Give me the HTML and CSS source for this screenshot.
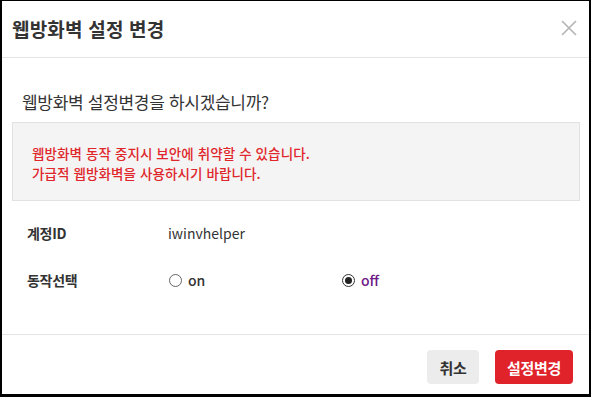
FILE: index.html
```html
<!DOCTYPE html>
<html lang="ko">
<head>
    <meta charset="UTF-8">
    <meta name="viewport" content="width=device-width, initial-scale=1.0">
    <title>웹방화벽 설정 변경</title>
    <link rel="stylesheet" href="styles.css">
</head>
<body>
    <div class="modal">
        <div class="modal-head">
            <h2 class="modal-title">웹방화벽 설정 변경</h2>
            <button class="btn-close" type="button">
                <svg width="16" height="16" viewBox="0 0 16 16"><path d="M1 1L15 15M15 1L1 15" stroke="#b4b4b4" stroke-width="1.6" fill="none"/></svg>
            </button>
        </div>
        <div class="modal-body">
            <p class="question">웹방화벽 설정변경을 하시겠습니까?</p>
            <div class="notice">
                <p>웹방화벽 동작 중지시 보안에 취약할 수 있습니다.</p>
                <p>가급적 웹방화벽을 사용하시기 바랍니다.</p>
            </div>
            <ul class="info">
                <li>
                    <span class="info-label">계정ID</span>
                    <span class="info-value">iwinvhelper</span>
                </li>
                <li>
                    <span class="info-label">동작선택</span>
                    <div class="radios">
                        <label class="radio"><i class="radio-dot"></i>on</label>
                        <label class="radio radio-checked"><i class="radio-dot"></i>off</label>
                    </div>
                </li>
            </ul>
        </div>
        <div class="modal-foot">
            <button class="btn btn-cancel" type="button">취소</button>
            <button class="btn btn-ok" type="button">설정변경</button>
        </div>
    </div>
</body>
</html>
```

FILE: styles.css
```css
*{margin:0; padding:0; box-sizing: border-box;}
li{list-style: none;}
html,body{height: 100%;}
body{
    font-family: "Noto Sans CJK KR", "Noto Sans", sans-serif;
    color: #333;
    background: #fff;
}

.modal{
    width: 591px; height: 397px;
    border: 2px solid #000;
    border-top-width: 1px;
    border-bottom-width: 3px;
    display: flex;
    flex-direction: column;
    background: #fff;
}
.modal-head{
    height: 57px;
    display: flex;
    align-items: center;
    justify-content: space-between;
    padding: 0 10px 2px 10px;
    border-bottom: 1px solid #e4e4e4;
}
.modal-title{
    font-size: 19px;
    font-weight: 700;
    letter-spacing: 0.2px;
    color: #333;
}
.btn-close{
    border: 0; background: none;
    width: 16px; height: 16px;
    margin-right: 2px;
    display: flex;
}

.modal-body{
    flex: 1;
    padding: 0 9px 0 10px;
}
.question{
    font-size: 17px;
    letter-spacing: -0.3px;
    padding: 32px 0 0 10px;
    line-height: 24px;
    height: 64px;
}
.notice{
    background: #f4f4f4;
    border: 1px solid #e2e2e2;
    height: 79px;
    padding: 20px 0 0 19px;
    color: #e0262b;
    font-size: 13.5px;
    font-weight: 500;
    line-height: 20px;
    letter-spacing: 0.1px;
}

.info{
    padding: 20px 0 0 15px;
}
.info li{
    display: flex;
    align-items: center;
    height: 24px;
    margin-bottom: 23px;
}
.info-label{
    width: 141px;
    font-size: 14px;
    font-weight: 700;
    letter-spacing: -0.3px;
}
.info-value{
    font-size: 14px;
}
.radios{
    display: flex;
}
.radio{
    display: flex;
    align-items: center;
    width: 173px;
    font-size: 14px;
    font-weight: 500;
}
.radio-dot{
    width: 13px; height: 13px;
    border: 1px solid #666;
    border-radius: 50%;
    margin: 0 6px 0 1px;
    position: relative;
}
.radio-checked{
    color: #6d1a85;
}
.radio-checked .radio-dot{
    border-color: #333;
}
.radio-checked .radio-dot::after{
    content: "";
    position: absolute; left: 2px; top: 2px;
    width: 7px; height: 7px;
    border-radius: 50%;
    background: #222;
}

.modal-foot{
    height: 60px;
    border-top: 1px solid #e4e4e4;
    display: flex;
    justify-content: flex-end;
    align-items: flex-start;
    padding: 15px 16px 0 0;
    gap: 16px;
}
.btn{
    height: 34px;
    border: 0;
    border-radius: 4px;
    font-family: inherit;
    font-size: 15px;
    font-weight: 700;
    letter-spacing: -0.3px;
}
.btn-cancel{
    width: 52px;
    background: #ececec;
    color: #333;
}
.btn-ok{
    width: 78px;
    background: #e0222b;
    color: #fff;
}
```
